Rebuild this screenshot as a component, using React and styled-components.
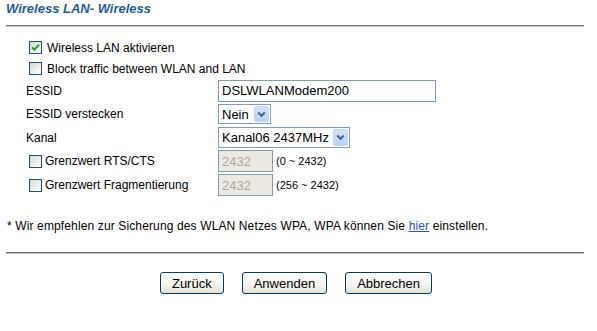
import React from "react";
import styled, { createGlobalStyle } from "styled-components";

const Global = createGlobalStyle`
  html, body { margin: 0; padding: 0; background: #fff; }
  body { font-family: "Liberation Sans", Arial, sans-serif; color: #000; }
`;

const Page = styled.div`
  width: 597px;
  height: 331px;
  box-sizing: border-box;
  padding: 0 13px 0 6px;
  display: flex;
  flex-direction: column;
`;

const Title = styled.h1`
  margin: 0;
  font-size: 13px;
  line-height: 18px;
  font-weight: bold;
  font-style: italic;
  color: #1f5c99;
`;

const Rule = styled.div`
  height: 0;
  border-top: 1px solid #6e6e6e;
  border-bottom: 1px solid #c8c8c8;
  margin-top: ${(p) => p.$top}px;
`;

const Form = styled.div`
  margin-top: 10px;
  padding-left: 20px;
  display: flex;
  flex-direction: column;
`;

const Row = styled.div`
  height: ${(p) => p.$h}px;
  display: grid;
  grid-template-columns: 192px auto;
  align-items: center;
  font-size: 12px;
`;

const CheckRow = styled.div`
  height: ${(p) => p.$h}px;
  display: flex;
  align-items: center;
  padding-left: 3px;
  font-size: 12px;
`;

const CheckCell = styled.div`
  display: flex;
  align-items: center;
  padding-left: 3px;
`;

const Box = styled.span`
  width: 11px;
  height: 11px;
  border: 1px solid #1c5180;
  background: linear-gradient(135deg, #d8d8d2 0%, #f4f4f0 70%, #ffffff 100%);
  display: inline-flex;
  align-items: center;
  justify-content: center;
  margin-right: ${(p) => p.$gap}px;
  flex: none;
`;

const Label = styled.span`
  white-space: nowrap;
`;

const Value = styled.div`
  display: flex;
  align-items: center;
  gap: 3px;
`;

const TextInput = styled.input`
  box-sizing: border-box;
  width: ${(p) => p.$w}px;
  height: 22px;
  border: 1px solid #7f9db9;
  background: ${(p) => (p.disabled ? "#ece9e1" : "#fff")};
  color: ${(p) => (p.disabled ? "#aca899" : "#000")};
  font-family: "Liberation Sans", Arial, sans-serif;
  font-size: 13px;
  padding: 0 3px;
  margin: 0;
  outline: none;
  -webkit-text-fill-color: ${(p) => (p.disabled ? "#aca899" : "#000")};
  opacity: 1;
`;

const Hint = styled.span`
  font-size: 11px;
  white-space: nowrap;
`;

const SelectWrap = styled.span`
  position: relative;
  display: inline-block;
  width: ${(p) => p.$w}px;
  height: ${(p) => p.$h}px;
`;

const SelectBox = styled.select`
  appearance: none;
  -webkit-appearance: none;
  box-sizing: border-box;
  width: 100%;
  height: 100%;
  border: 1px solid #7f9db9;
  border-radius: 0;
  background: #fff;
  font-family: "Liberation Sans", Arial, sans-serif;
  font-size: 13px;
  color: #000;
  padding: 0 0 0 3px;
  margin: 0;
  outline: none;
`;

const ArrowButton = styled.span`
  position: absolute;
  top: 2px;
  right: 2px;
  bottom: 2px;
  width: 15px;
  border-radius: 2px;
  background: linear-gradient(180deg, #d4e0fc 0%, #bcd0fa 100%);
  border: 1px solid #c3d3fb;
  box-sizing: border-box;
  display: flex;
  align-items: center;
  justify-content: center;
  pointer-events: none;
`;

const Note = styled.p`
  margin: 22px 0 0 1px;
  font-size: 12px;
  line-height: 14px;
  letter-spacing: 0.13px;
  white-space: nowrap;
`;

const Link = styled.a`
  color: #2a4fc4;
  text-decoration: underline;
`;

const Buttons = styled.div`
  margin-top: 18px;
  display: flex;
  justify-content: center;
  gap: 18px;
  padding-left: 2px;
`;

const Button = styled.button`
  height: 22px;
  padding: 0 11px;
  border: 1px solid #003c74;
  border-radius: 3px;
  background: linear-gradient(180deg, #ffffff 0%, #f4f3ee 60%, #e3e1d5 100%);
  font-family: "Liberation Sans", Arial, sans-serif;
  font-size: 13px;
  color: #000;
  margin: 0;
`;

const Check = ({ checked, gap }) => (
  <Box $gap={gap}>
    {checked && (
      <svg width="9" height="9" viewBox="0 0 9 9">
        <path d="M1 4.2 L3.4 6.6 L8 1.8" fill="none" stroke="#21a121" strokeWidth="2" />
      </svg>
    )}
  </Box>
);

const Select = ({ w, h, value, options }) => (
  <SelectWrap $w={w} $h={h}>
    <SelectBox defaultValue={value}>
      {options.map((o) => (
        <option key={o}>{o}</option>
      ))}
    </SelectBox>
    <ArrowButton>
      <svg width="9" height="7" viewBox="0 0 9 7">
        <path d="M1.2 1.5 L4.5 4.8 L7.8 1.5" fill="none" stroke="#4d6185" strokeWidth="2" />
      </svg>
    </ArrowButton>
  </SelectWrap>
);

export default function App() {
  return (
    <>
      <Global />
      <Page>
        <Title>Wireless LAN- Wireless</Title>
        <Rule $top={7} />
        <Form>
          <CheckRow $h={21}>
            <Check checked gap={5} />
            <Label>Wireless LAN aktivieren</Label>
          </CheckRow>
          <CheckRow $h={21}>
            <Check gap={5} />
            <Label>Block traffic between WLAN and LAN</Label>
          </CheckRow>
          <Row $h={23}>
            <Label>ESSID</Label>
            <Value>
              <TextInput $w={218} defaultValue="DSLWLANModem200" />
            </Value>
          </Row>
          <Row $h={24}>
            <Label>ESSID verstecken</Label>
            <Value>
              <Select w={53} h={20} value="Nein" options={["Nein", "Ja"]} />
            </Value>
          </Row>
          <Row $h={23}>
            <Label>Kanal</Label>
            <Value>
              <Select w={132} h={21} value="Kanal06 2437MHz" options={["Kanal06 2437MHz"]} />
            </Value>
          </Row>
          <Row $h={24}>
            <CheckCell>
              <Check gap={3} />
              <Label>Grenzwert RTS/CTS</Label>
            </CheckCell>
            <Value>
              <TextInput $w={55} disabled defaultValue="2432" />
              <Hint>(0 ~ 2432)</Hint>
            </Value>
          </Row>
          <Row $h={24}>
            <CheckCell>
              <Check gap={3} />
              <Label>Grenzwert Fragmentierung</Label>
            </CheckCell>
            <Value>
              <TextInput $w={55} disabled defaultValue="2432" />
              <Hint>(256 ~ 2432)</Hint>
            </Value>
          </Row>
        </Form>
        <Note>
          * Wir empfehlen zur Sicherung des WLAN Netzes WPA, WPA können Sie <Link href="#">hier</Link> einstellen.
        </Note>
        <Rule $top={19} />
        <Buttons>
          <Button>Zurück</Button>
          <Button>Anwenden</Button>
          <Button>Abbrechen</Button>
        </Buttons>
      </Page>
    </>
  );
}
